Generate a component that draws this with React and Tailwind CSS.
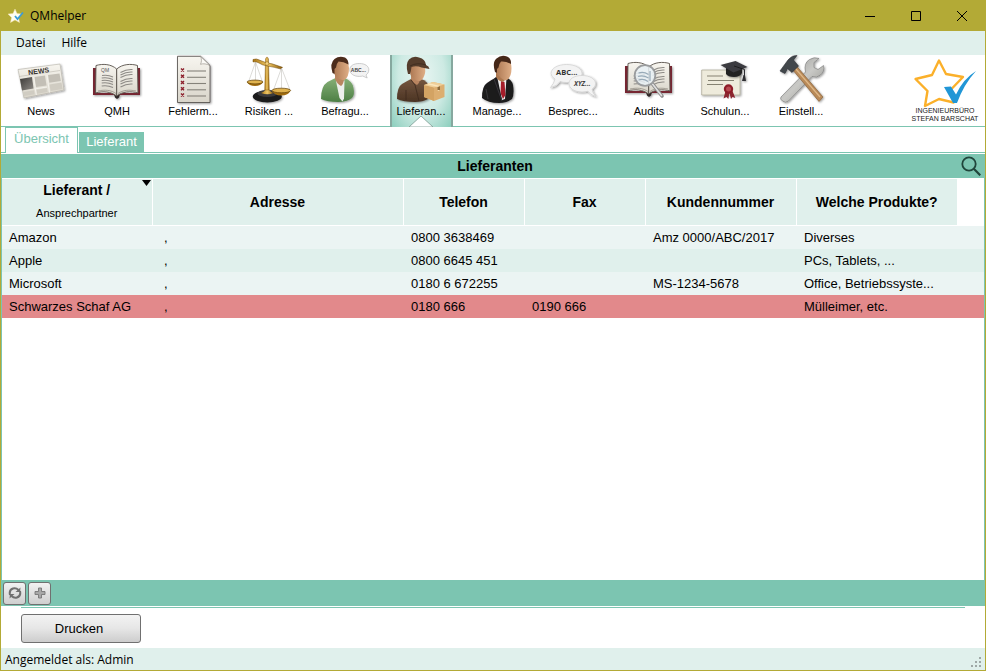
import React from "react";

const sans = "font-['Liberation_Sans',Arial,sans-serif]";
const segoe = "font-['Open_Sans','Noto_Sans',sans-serif]";

function Icon({ children }) {
  return (
    <svg viewBox="0 0 48 48" className="h-12 w-12 overflow-visible" aria-hidden="true">
      {children}
    </svg>
  );
}

function Defs() {
  return (
    <svg className="absolute h-0 w-0" aria-hidden="true">
      <defs>
        <linearGradient id="paper" x1="0" y1="0" x2="0" y2="1">
          <stop offset="0" stopColor="#f7f5ef" />
          <stop offset="1" stopColor="#d9d5ca" />
        </linearGradient>
        <linearGradient id="skin" x1="0" y1="0" x2="1" y2="0">
          <stop offset="0" stopColor="#a9744f" />
          <stop offset="1" stopColor="#dfae86" />
        </linearGradient>
        <linearGradient id="gold" x1="0" y1="0" x2="1" y2="0">
          <stop offset="0" stopColor="#a87412" />
          <stop offset="0.5" stopColor="#efc766" />
          <stop offset="1" stopColor="#8a5a08" />
        </linearGradient>
        <linearGradient id="green" x1="0" y1="0" x2="0" y2="1">
          <stop offset="0" stopColor="#86b077" />
          <stop offset="1" stopColor="#4d7f45" />
        </linearGradient>
        <linearGradient id="brown" x1="0" y1="0" x2="0" y2="1">
          <stop offset="0" stopColor="#75573f" />
          <stop offset="1" stopColor="#4a3323" />
        </linearGradient>
        <linearGradient id="steel" x1="0" y1="0" x2="1" y2="1">
          <stop offset="0" stopColor="#8f8f8d" />
          <stop offset="0.5" stopColor="#c9c9c6" />
          <stop offset="1" stopColor="#85857f" />
        </linearGradient>
        <linearGradient id="photo" x1="0" y1="0" x2="1" y2="1">
          <stop offset="0" stopColor="#3c3a38" />
          <stop offset="1" stopColor="#8e8a85" />
        </linearGradient>
        <filter id="shadow" x="-20%" y="-20%" width="150%" height="150%">
          <feDropShadow dx="1" dy="1" stdDeviation="1" floodOpacity="0.4" />
        </filter>
      </defs>
    </svg>
  );
}

const NewsIcon = () => (
  <Icon>
    <g filter="url(#shadow)">
      <path d="M1 13.500 43 8l4 26L7 42Z" fill="url(#paper)" stroke="#b5b1a8" strokeWidth=".6" />
    </g>
    <path d="m3 23 12-2 1.500 11.500L5 34.500Z" fill="url(#photo)" />
    <path d="m17.500 21 10.500-1.600 1.500 10L19 31Z M31 19l11.500-1.600 1.300 7.600-11.500 1.800Z" fill="#c3bfb6" />
    <path d="m6 36 11-1.800.6 4L7 40Z M19.500 33.800l10.500-1.700.6 4-10.500 1.700Z M32.500 28.500 44.500 26.600l1.100 6.300-12 2Z" fill="#d0ccc2" />
    <path d="m17 33 13-2M16.600 21l2.700 18M30 19l2.500 17.500" stroke="#f4f2ec" strokeWidth="1" />
    <path d="M2 20.500 43 14.500" stroke="#bcb8ae" strokeWidth=".6" />
    <text x="11.500" y="19" transform="rotate(-8 12 19)" fontSize="7" fontWeight="700" fill="#37322e" className={sans}>NEWS</text>
  </Icon>
);

function Book({ label }) {
  return (
    <>
      <g filter="url(#shadow)">
        <path d="M0 12h4v25h17l3 2.500 3-2.500h16V12h4v27H27l-3 2.500L21 39H0Z" fill="#762832" />
        <path d="M21 38h6l-1 3.500-2 1.500-2-1.500Z" fill="#2d2626" />
      </g>
      <path d="M3 9.500C10 7.500 18 8 23.700 13v27C18 35.500 10 35 2.500 37Z" fill="url(#paper)" stroke="#575049" strokeWidth=".9" />
      <path d="M44.500 9.500C38 7.500 29.500 8 23.700 13v27C29 35.500 38 35 45 37Z" fill="url(#paper)" stroke="#575049" strokeWidth=".9" />
      <path d="M5 35c7-1.500 13-1 18 2.500M43 35c-7-1.500-13-1-18 2.500" fill="none" stroke="#8c867c" strokeWidth=".7" />
      <path d="M9 19.500q6-1 11 1.500M8.700 22q6-1 11.300 1.500M8.700 24.500q6-1 11.300 1.500M8.700 27q6-1 11.300 1.500M8.700 30q6-1 11.300 1.500M27.500 16.500q6-3.500 12-3M27.500 19q6-3.500 12-3M27.500 21.500q6-3.500 12-3M27.500 25.500q6-3.500 12-3M27.500 28q6-3.500 12-3M27.500 31q6-3.500 12-3" fill="none" stroke="#8d8a86" strokeWidth="1.100" />
      {label && <text x="8" y="16" fontSize="5" fill="#555" className={sans}>QM</text>}
    </>
  );
}

const BookIcon = () => <Icon><Book label /></Icon>;

const ListIcon = () => (
  <Icon>
    <g filter="url(#shadow)">
      <path d="M8.500.3H31.500L41 9.500V46.500H8.500Z" fill="url(#paper)" stroke="#4b4844" strokeWidth=".8" />
    </g>
    <path d="M31.500.3c1.500 3 1 6 0 8 3-1 6-.5 9.500 1.200Z" fill="#fbfaf6" stroke="#8e8a82" strokeWidth=".6" />
    {[14, 20.3, 26.5, 32.8, 39].map((y) => (
      <g key={y}>
        <path d={`M12 ${y - 1.5}l3 3m0-3l-3 3`} stroke="#8d1f2c" strokeWidth="1.400" />
        <path d={`M18 ${y + 1}H37`} stroke="#85827a" strokeWidth="1.100" />
      </g>
    ))}
  </Icon>
);

const ScaleIcon = () => (
  <Icon>
    <g filter="url(#shadow)">
      <ellipse cx="22.300" cy="40.500" rx="14.500" ry="6" fill="#1b1b1d" />
      <ellipse cx="22.300" cy="37.500" rx="10" ry="3.500" fill="#3a3a3d" />
    </g>
    <path d="M16 37q5-2 5-5h2.500q0 3 5 5-6 2.500-12.500 0Z" fill="url(#gold)" />
    <path d="M20.500 3q1.500-4 3 0l.8 31h-4.600Z" fill="url(#gold)" stroke="#7a4f06" strokeWidth=".4" />
    <path d="M8 3.500q3-1.500 7 .8 6 3 12 3.500l10.500 3.500-1.500 1.800q-7-2-13-3-6-.8-10-3.600-2-1-5-.6Z" fill="url(#gold)" stroke="#6b4504" strokeWidth=".5" />
    <circle cx="22" cy="7.500" r="1.800" fill="#f2d27f" stroke="#7a4f06" strokeWidth=".4" />
    <path d="M10.500 6 3.500 26M10.500 6l7 20M36.500 12l-8 22M36.500 12l8.500 22M10.500 6v19M36.500 12v21" fill="none" stroke="#b9b7b1" strokeWidth=".5" />
    <path d="M2 26h16q-2 4-8 4t-8-4ZM27 34.500h18.500q-2 5-9.200 5T27 34.500Z" fill="#a16c0f" />
    <ellipse cx="10" cy="26" rx="8" ry="1.900" fill="#e0b34f" stroke="#5e3d05" strokeWidth=".7" />
    <ellipse cx="36.300" cy="34.500" rx="9.300" ry="2.300" fill="#e0b34f" stroke="#5e3d05" strokeWidth=".7" />
  </Icon>
);

const SurveyIcon = () => (
  <Icon>
    <g filter="url(#shadow)">
      <path d="M0 43q0-13 6.500-17 5-2.500 8-4h9q8 3 9 10 1.500 7-1.500 10-5 4-14 4-11 0-17-3Z" fill="url(#green)" />
    </g>
    <path d="m15 25 3.500 17 3 3.500 1.500-3 .5-18Z" fill="#edefec" />
    <path d="M14 19h9v5q-1 5-3 6-4-2-6-7Z" fill="#b98560" />
    <path d="M11.500 9q3-6 9-6 7.500 1 7.500 9 0 9-4.500 12-4 1-8-3-4-4-4-12Z" fill="url(#skin)" />
    <path d="M11.500 17q-3-10 2-14Q18-.5 24 1.500q3.500 2 3.500 7-5-3-10-3-2 2-2.500 6l-1.500 1.500v5Z" fill="#4c2c1c" />
    <path d="M38.300 7.500c6 0 9.500 2.800 9.500 6.200 0 3-1.500 4.300-2.800 5.300l1.200 3-4.500-2q-1.500.4-3.400.4c-6 0-9.500-3-9.500-6.700s3.500-6.200 9.500-6.200Z" fill="#f3f3f3" stroke="#b9b9b9" strokeWidth=".7" />
    <text x="29.800" y="15.500" fontSize="5" fontWeight="700" fill="#444" className={sans}>ABC...</text>
  </Icon>
);

const SupplierIcon = () => (
  <Icon>
    <g filter="url(#shadow)">
      <path d="M0 43q0-12 5-15 5-3 9-5h10q7 2 8 9 1 8-1 11-5 3-13 3-12 0-18-3Z" fill="url(#brown)" />
    </g>
    <path d="M14 19h9v5q-1 4-3 5-4-2-6-6Z" fill="#b98560" />
    <path d="M12 9h15.500q1.500 6 0 10-2 6-6 6-4-.5-8-6Z" fill="url(#skin)" />
    <path d="M11 18q-3-10 1-14.500Q16-.5 22 1.500q6.500 1.500 7 7.500 3 1 3.500 4l-8-1.500q-5-2-10-.5l-.5 3-1 4Z" fill="#553d2c" />
    <path d="M13 10q7-4 16-1" fill="none" stroke="#3b291d" strokeWidth=".8" />
    <path d="m14 24 4 5 4 16M9 34v10" fill="none" stroke="#3e2a1d" strokeWidth=".8" />
    <path d="m27 29 9-3 11.500 2.500V41L37 45l-10-4Z" fill="#dcae70" />
    <path d="M27 29 37 31.500V45L27 41Z" fill="#d3a363" />
    <path d="m27 29 9-3 11.500 2.500L37 31.500Z" fill="#efcf98" />
    <path d="m31 27.700 10.500 2.500v4.500" fill="none" stroke="#fae6bd" strokeWidth="1.400" />
    <path d="M40.500 31v3h2.500v-3.800" fill="#8c6a39" />
  </Icon>
);

const ManagerIcon = () => (
  <Icon>
    <g filter="url(#shadow)">
      <path d="M9 42q0-12 5-15 4-3 10-6h9q6 3 7 8 1.500 9-1 14-5 4-13 4-11 0-17-5Z" fill="#1c1b1d" />
    </g>
    <path d="m23 22 6 22 3-1 1.500-21Z" fill="#eeeeee" />
    <path d="m28 25 3.500 1 1 13-2.500 4-2.500-6Z" fill="#a51d2a" />
    <path d="m21 23 3-3 5 24-6-8Z" fill="#1c1b1d" />
    <path d="M23 17h9v7l-2 2q-5-1-7-5Z" fill="#ad7850" />
    <path d="M22 8q3-6 9-6 7.500 1 7.500 10 0 9-4.500 12Q30 25 26 20q-4-3-4-12Z" fill="url(#skin)" />
    <path d="M22 16q-3-10 1.500-13.500Q28-1.500 34 .5q4.500 2 4 7.500-5-3-10-2.500-2 2-2.500 6L24 13v4Z" fill="#452718" />
    <path d="m21 23 8 22M13 33l2 10" stroke="#3f3e42" strokeWidth=".8" />
  </Icon>
);

const TalkIcon = () => (
  <Icon>
    <g filter="url(#shadow)">
      <path d="M17.500 8.500c9 0 15.500 4 15.500 9s-6.500 9-15.500 9q-3.500 0-6.500-1-3 5-9.500 6 3.500-4 4.500-8.500-4-2.500-4-5.500c0-5 6.500-9 15.500-9Z" fill="#f3f3f3" stroke="#d0d0d0" strokeWidth=".7" />
      <path d="M33 19.500c8 0 13.500 3.500 13.500 8 0 2.500-1.500 4.300-3.500 5.700q.5 4 4 7.300-6-1.500-8-5.300-3 .8-6 .8c-8 0-13-4-13-8.500s5-8 13-8Z" fill="#f3f3f3" stroke="#d0d0d0" strokeWidth=".7" />
    </g>
    <text x="7" y="19" fontSize="7.500" fontWeight="700" fill="#333" className={segoe}>ABC...</text>
    <text x="25" y="30" fontSize="6.500" fontWeight="700" fontStyle="italic" fill="#444" className={segoe}>XYZ...</text>
  </Icon>
);

const AuditIcon = () => (
  <Icon>
    <g transform="translate(0 -2)"><Book /></g>
    <path d="m27.500 28 9.500 12" stroke="#8b8b8b" strokeWidth="3.600" strokeLinecap="round" />
    <path d="m27.500 28 9 11.500" stroke="#e0e0e0" strokeWidth="1.600" strokeLinecap="round" />
    <circle cx="20" cy="19.500" r="10.300" fill="#e9f1f6" fillOpacity=".85" stroke="#9a9c9e" strokeWidth="1.800" />
    <path d="M13.500 17q5-2 10 1.500M13 20.500q5-2 10.500 1.500M13.500 24q5-2 9.500 1.500M25 15v10" fill="none" stroke="#98aab8" strokeWidth="1.200" />
  </Icon>
);

const TrainingIcon = () => (
  <Icon>
    <g filter="url(#shadow)">
      <path d="M.7 14H39v25H.7Z" fill="#eeebdc" stroke="#a7a390" strokeWidth=".7" />
    </g>
    <path d="M6 20h16M7 24.500h26M6 28.500h16" stroke="#858272" strokeWidth="1.200" />
    <path d="m24.500 35-2 7.500 3-1.500 1.800 2 1.200-6 1.500 6 1.500-2 2.800 1-3-7.500Z" fill="#8c2730" />
    <circle cx="27.500" cy="33" r="4.700" fill="#8e1c28" />
    <circle cx="27.500" cy="33" r="2.500" fill="#b84a50" />
    <g filter="url(#shadow)">
      <path d="M25 11v7q2 3 8 3t8-4v-6Z" fill="#222224" />
      <path d="m19.500 9 15-4 12 6-14 5.500Z" fill="#3b3b3f" />
      <path d="m33 10 10.500 3.500V20" fill="none" stroke="#1b1b1c" strokeWidth=".9" />
      <path d="m42.500 19-1.500 6h4l-1-6Z" fill="#2d2d30" />
    </g>
  </Icon>
);

const ToolsIcon = () => (
  <Icon>
    <g filter="url(#shadow)">
      <path d="M4 41 28.500 16q-2-9 4-12.500Q37 .5 42 2.500l-5 4v5l4 2 5.500-4q1.500 6-3 9.500-4 3.500-8.500 1.500L11.500 45q-3 2.500-6 0-3-2-1.500-4Z" fill="url(#steel)" stroke="#777" strokeWidth=".6" />
      <path d="m15 13 4-3.500 27 31.500-4 4.500Z" fill="#b98a58" stroke="#7c5732" strokeWidth=".6" />
      <path d="m18 12 25 29" stroke="#dfb888" strokeWidth="1.200" />
      <path d="M3 15 11 4q4-5 9-4.500l-3.500 4.500 5 6-6.500 6.500-4.500-4L8 17.500Z" fill="#42464c" stroke="#2c2f33" strokeWidth=".6" />
    </g>
  </Icon>
);

const modules = [
  { label: "News", Pic: NewsIcon },
  { label: "QMH", Pic: BookIcon },
  { label: "Fehlerm...", Pic: ListIcon },
  { label: "Risiken ...", Pic: ScaleIcon },
  { label: "Befragu...", Pic: SurveyIcon },
  { label: "Lieferan...", Pic: SupplierIcon, active: true },
  { label: "Manage...", Pic: ManagerIcon },
  { label: "Besprec...", Pic: TalkIcon },
  { label: "Audits", Pic: AuditIcon },
  { label: "Schulun...", Pic: TrainingIcon },
  { label: "Einstell...", Pic: ToolsIcon },
];

const suppliers = [
  ["Amazon", ",", "0800 3638469", "", "Amz 0000/ABC/2017", "Diverses"],
  ["Apple", ",", "0800 6645 451", "", "", "PCs, Tablets, ..."],
  ["Microsoft", ",", "0180 6 672255", "", "MS-1234-5678", "Office, Betriebssyste..."],
  ["Schwarzes Schaf AG", ",", "0180 666", "0190 666", "", "Mülleimer, etc."],
];
const rowColors = ["bg-[#ebf4f3]", "bg-[#e0f0ec]", "bg-[#ebf4f3]", "bg-[#e2898b]"];
const cellPadding = ["pl-[7px]", "pl-3", "pl-2", "pl-2", "pl-2", "pl-2"];

function TitleBar() {
  return (
    <header className={`flex h-[31px] items-center pl-[7px] text-xs text-black ${segoe}`}>
      <svg viewBox="0 0 16 16" className="mr-1.5 h-4 w-4" aria-hidden="true">
        <path d="m7 1 2 4.500 5 .5-3.500 3.500 1 5L7 12l-4.500 2.500 1-5L0 6l5-.5Z" fill="#fffdf2" stroke="#f0dfa0" strokeWidth=".5" />
        <path d="m7 8 2.500 3L15 4.500" fill="none" stroke="#3a9bd8" strokeWidth="1.800" />
      </svg>
      <h1 className="flex-1">QMhelper</h1>
      <button aria-label="Minimieren" className="flex h-full w-[46px] items-center justify-center">
        <svg viewBox="0 0 10 10" className="h-2.5 w-2.5"><path d="M0 5.500h10" stroke="#000" /></svg>
      </button>
      <button aria-label="Maximieren" className="flex h-full w-[46px] items-center justify-center">
        <svg viewBox="0 0 10 10" className="h-2.5 w-2.5"><path d="M.5.5h9v9h-9Z" fill="none" stroke="#000" /></svg>
      </button>
      <button aria-label="Schließen" className="flex h-full w-[46px] items-center justify-center">
        <svg viewBox="0 0 10 10" className="h-2.5 w-2.5"><path d="m0 0 10 10M10 0 0 10" stroke="#000" /></svg>
      </button>
    </header>
  );
}

function Logo() {
  return (
    <div className="ml-auto flex w-[62px] shrink-0 flex-col items-center pt-1 text-[7px] leading-[8px] whitespace-nowrap text-[#222]">
      <svg viewBox="0 0 62 48" className="h-12 w-[62px] overflow-visible" aria-hidden="true">
        <path d="M25 1.500 32 15l17 3-12 12.500 2.500 13L25 40 11 47l2.500-15L1.500 20 18 16Z" fill="none" stroke="#fbb02a" strokeWidth="2.400" strokeLinejoin="round" />
        <path d="m30 28 7-.5 5 8Q49 20 62 12 50 25 43 44h-4Z" fill="#2196d6" />
      </svg>
      <span>INGENIEURBÜRO</span>
      <span>STEFAN BARSCHAT</span>
    </div>
  );
}

function Toolbar() {
  return (
    <nav className="flex h-[72px] border-b border-[#7cc5b1] bg-white pr-[9px] pl-0.5">
      {modules.map(({ label, Pic, active }) => (
        <button
          key={label}
          className="relative flex w-[76px] shrink-0 flex-col items-center pt-px text-[11px] leading-[14px] whitespace-nowrap text-black"
        >
          {active && (
            <span className="absolute -bottom-px left-[7px] h-[72px] w-[63px] border-x-2 border-[#86a89f] bg-[radial-gradient(ellipse_at_50%_30%,#eaf6f3_0%,#cdeae3_55%,#8ccebd_100%)]">
              <svg viewBox="0 0 24 11" className="absolute bottom-0 left-[17px] h-[11px] w-6" aria-hidden="true">
                <path d="M0 11 12 0l12 11Z" fill="#fff" stroke="#7b9a92" strokeWidth=".8" />
              </svg>
            </span>
          )}
          <span className="relative"><Pic /></span>
          <span className="relative">{label}</span>
        </button>
      ))}
      <Logo />
    </nav>
  );
}

function SupplierTable() {
  return (
    <table className="w-full table-fixed border-collapse text-[13px] text-black">
      <colgroup>
        <col className="w-[150px]" />
        <col className="w-[251px]" />
        <col className="w-[121px]" />
        <col className="w-[121px]" />
        <col className="w-[151px]" />
        <col className="w-[161px]" />
        <col />
      </colgroup>
      <thead>
        <tr className="h-[47px] bg-[#e0f0ec] text-sm">
          <th className="relative border-r border-y border-white p-0">
            <span className="block leading-[22px]">Lieferant /</span>
            <span className="block text-[11px] leading-6 font-normal">Ansprechpartner</span>
            <svg viewBox="0 0 9 6" className="absolute top-px right-px h-1.5 w-[9px]" aria-hidden="true">
              <path d="M0 0h9L4.500 6Z" />
            </svg>
          </th>
          {["Adresse", "Telefon", "Fax", "Kundennummer"].map((t) => (
            <th key={t} className="border-r border-y border-white p-0">{t}</th>
          ))}
          <th className="border-y border-white p-0">Welche Produkte?</th>
          <td className="bg-white" />
        </tr>
      </thead>
      <tbody>
        {suppliers.map((row, i) => (
          <tr key={row[0]} className={`h-[23px] ${rowColors[i]}`}>
            {row.map((cell, j) => (
              <td key={j} className={`truncate py-0 pr-0 leading-[23px] ${cellPadding[j]}`}>{cell}</td>
            ))}
            <td />
          </tr>
        ))}
      </tbody>
    </table>
  );
}

const smallButton = "flex h-[23px] w-[23px] items-center justify-center rounded-[3px] border border-[#707070] bg-linear-to-b from-[#f2f2f2] to-[#cfcfcf]";

export default function App() {
  return (
    <div className={`flex min-h-screen flex-col border-x border-b border-[#b3aa36] bg-[#b3aa36] ${sans}`}>
      <Defs />
      <TitleBar />
      <div className={`flex h-6 items-center gap-4 bg-[#e0f0ec] pl-[15px] text-xs text-black ${segoe}`}>
        <button>Datei</button>
        <button>Hilfe</button>
      </div>
      <Toolbar />
      <main className="flex flex-1 flex-col bg-white">
        <div className="flex h-[26px] items-end border-b border-[#7cc5b1] pl-1 text-[13px]">
          <button className="-mb-px h-[26px] w-[73px] border border-b-0 border-[#7cc5b1] bg-white pb-1 leading-5 text-[#7cc5b1]">Übersicht</button>
          <button className="ml-px h-5 w-[65px] bg-[#7cc5b1] leading-5 text-white">Lieferant</button>
        </div>
        <div className="mt-px flex h-6 items-center bg-[#7cc5b1] pr-1 pl-7">
          <h2 className="flex-1 text-center text-sm font-bold text-black">Lieferanten</h2>
          <button aria-label="Suchen">
            <svg viewBox="0 0 20 20" className="h-5 w-5" fill="none" stroke="#20453b" strokeWidth="1.800">
              <circle cx="8" cy="8" r="6.700" />
              <path d="m12.800 12.800 6.500 6.500" strokeWidth="2.200" />
            </svg>
          </button>
        </div>
        <section className="flex-1 border-x border-[#7cc5b1]">
          <SupplierTable />
        </section>
        <div className="flex h-[26px] items-center gap-0.5 bg-[#7cc5b1] pl-0.5">
          <button aria-label="Aktualisieren" className={smallButton}>
            <svg viewBox="0 0 14 14" className="h-3.5 w-3.5" fill="none" stroke="#707070" strokeWidth="2">
              <path d="M2 9Q.8 4 5 2.500 8 1.500 10.500 4M12 5q1.200 5-3 6.500-3 1-5.500-1.500" />
              <path d="m12.500 1.500-.5 4.500H7.500ZM1.500 12.500 2 8h4.500Z" fill="#707070" stroke="none" />
            </svg>
          </button>
          <button aria-label="Hinzufügen" className={smallButton}>
            <svg viewBox="0 0 12 12" className="h-3 w-3"><path d="M4.500 1h3v3.500H11v3H7.500V11h-3V7.500H1v-3h3.500Z" fill="#a8a8a8" stroke="#777" strokeWidth=".9" /></svg>
          </button>
        </div>
        <div className="mx-5 mt-px h-[41px] border-t border-[#7cc5b1] pt-1.5">
          <button className="h-[29px] w-[120px] rounded-[3px] border border-[#707070] bg-linear-to-b from-[#f3f3f3] via-[#e6e6e6] to-[#cdcdcd] pr-1 text-[13px] text-black">Drucken</button>
        </div>
      </main>
      <footer className={`flex h-[22px] items-center bg-[#e0f0ec] pt-0.5 pr-[3px] pl-1 text-xs text-black ${segoe}`}>
        <span className="flex-1">Angemeldet als: Admin</span>
        <svg viewBox="0 0 11 11" className="mt-1 h-[11px] w-[11px]" fill="#9fa8a6" aria-hidden="true">
          <path d="M8 0h2v2H8ZM4 4h2v2H4ZM8 4h2v2H8ZM0 8h2v2H0ZM4 8h2v2H4ZM8 8h2v2H8Z" />
        </svg>
      </footer>
    </div>
  );
}
